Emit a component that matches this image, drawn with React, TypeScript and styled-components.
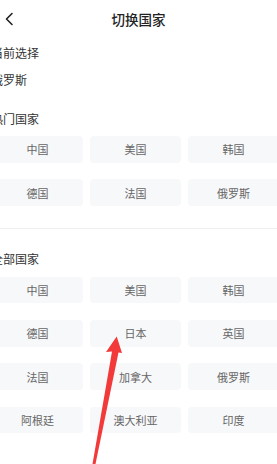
import React from 'react';
import styled, { createGlobalStyle } from 'styled-components';

const GlobalStyle = createGlobalStyle`
  html, body {
    margin: 0;
    padding: 0;
    background: #ffffff;
    overflow: hidden;
  }
  body {
    font-family: "Noto Sans CJK SC", "Noto Sans", sans-serif;
  }
`;

const Page = styled.div`
  position: relative;
  width: 277px;
  height: 464px;
  overflow: hidden;
`;

const Header = styled.div`
  position: relative;
  height: 38px;
  display: flex;
  align-items: center;
  justify-content: center;
`;

const BackButton = styled.div`
  position: absolute;
  left: 3px;
  top: 12px;
  width: 12px;
  height: 14px;
  display: flex;
`;

const Title = styled.div`
  font-size: 13.5px;
  font-weight: 500;
  color: #222;
  line-height: 18px;
`;

const Content = styled.div`
  margin-left: -8px;
  width: 288px;
`;

const Label = styled.div<{ $top: number }>`
  margin-top: ${({ $top }) => $top}px;
  padding-left: 0;
  font-size: 12px;
  line-height: 18px;
  color: #333;
  margin-left: -1px;
`;

const Grid = styled.div<{ $top: number }>`
  margin-top: ${({ $top }) => $top}px;
  display: grid;
  grid-template-columns: repeat(3, 91px);
  column-gap: 7px;
  row-gap: 16.8px;
`;

const Cell = styled.div`
  height: 26.5px;
  border-radius: 4px;
  background: #f7f8fa;
  display: flex;
  align-items: center;
  justify-content: center;
  font-size: 11px;
  color: #666;
`;

const Divider = styled.div`
  margin-top: 22px;
  margin-left: 8px;
  width: 277px;
  height: 1px;
  background: #efefef;
`;

const Arrow = styled.svg`
  position: absolute;
  left: 0;
  top: 0;
  pointer-events: none;
`;

const hot = ['中国', '美国', '韩国', '德国', '法国', '俄罗斯'];
const all = ['中国', '美国', '韩国', '德国', '日本', '英国', '法国', '加拿大', '俄罗斯', '阿根廷', '澳大利亚', '印度'];

export default function App() {
  return (
    <Page>
      <GlobalStyle />
      <Header>
        <BackButton>
          <svg width="12" height="14" viewBox="0 0 12 14">
            <path d="M9 1.5 L3.5 7 L9 12.5" fill="none" stroke="#222" strokeWidth="1.6" strokeLinecap="round" strokeLinejoin="round" />
          </svg>
        </BackButton>
        <Title>切换国家</Title>
      </Header>
      <Content>
        <Label $top={6}>当前选择</Label>
        <Label $top={9}>俄罗斯</Label>
        <Label $top={21}>热门国家</Label>
        <Grid $top={8}>
          {hot.map((c) => (
            <Cell key={c}>{c}</Cell>
          ))}
        </Grid>
        <Divider />
        <Label $top={21}>全部国家</Label>
        <Grid $top={9}>
          {all.map((c) => (
            <Cell key={c}>{c}</Cell>
          ))}
        </Grid>
      </Content>
      <Arrow width="277" height="464" viewBox="0 0 277 464">
        <path d="M116.7 336.5 L122 353 L118.5 352.5 L95.5 464 L92.5 464 L112 351.5 L106 352 Z" fill="#f23a3a" />
      </Arrow>
    </Page>
  );
}
